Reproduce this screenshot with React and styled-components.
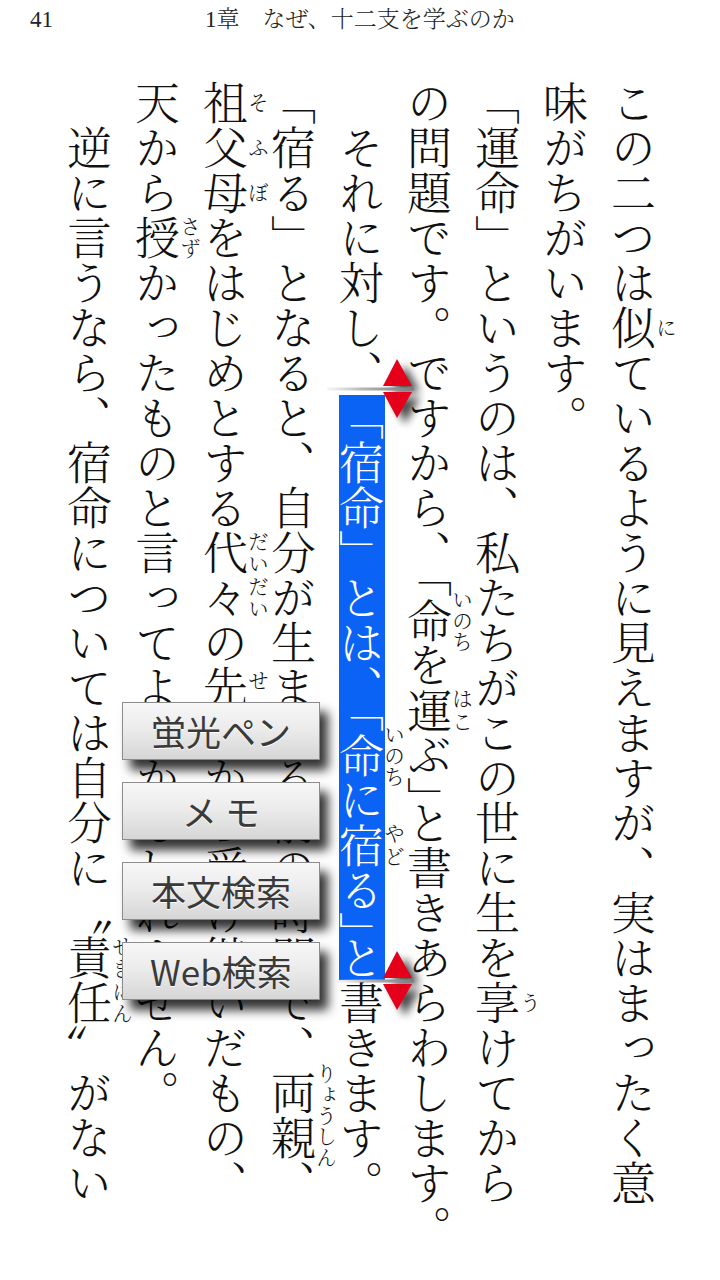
import React from 'react';
import styled, { createGlobalStyle } from 'styled-components';

const GlobalStyle = createGlobalStyle`
  html, body { margin: 0; padding: 0; background: #fff; }
  body { width: 720px; height: 1280px; overflow: hidden; }
`;

const Page = styled.div`
  position: relative;
  width: 720px;
  height: 1280px;
  overflow: hidden;
  background: #fff;
  font-family: "Noto Serif CJK JP", "Noto Sans CJK JP", serif;
  font-weight: 300;
`;

const Header = styled.header`
  display: flex;
  align-items: baseline;
  height: 42px;
  padding-left: 30px;
  font-family: "Liberation Serif", "Noto Serif CJK JP", "Noto Sans CJK JP", serif;
  font-size: 23px;
  line-height: 40px;
  color: #222;
`;

const PageNo = styled.span`
  width: 175px;
`;

const Title = styled.span`
  white-space: pre;
`;

const Body = styled.main`
  box-sizing: border-box;
  width: 720px;
  height: 1200px;
  writing-mode: vertical-rl;
  padding: 38px 53px 0 0;
  font-size: 45px;
  color: #111;
  text-spacing-trim: space-all;
`;

const Line = styled.p`
  margin: 0;
  width: 68px;
  line-height: 68px;
  white-space: nowrap;
  text-indent: ${(p) => (p.$indent ? '1em' : '0')};
`;

const Half = styled.span`
  font-feature-settings: "vhal" 1;
`;

const Selected = styled.span`
  color: #fff;
  background-image: linear-gradient(#0b63f6, #0b63f6);
  background-repeat: no-repeat;
  background-position: center;
  background-size: 46px 100%;
`;

const RubyBase = styled.span`
  position: relative;
`;

const RubyText = styled.span`
  position: absolute;
  top: 0;
  bottom: 0;
  left: calc(50% + 22px);
  display: flex;
  justify-content: ${(p) => p.$align};
  font-size: 21px;
  line-height: 21px;
  width: 21px;
  color: #111;
  white-space: nowrap;
  text-indent: 0;
`;

const RubyChar = styled.span`
  display: block;
`;

function R({ b, t }) {
  const align = t.length * 21 > b.length * 45 ? 'center' : 'space-around';
  return (
    <RubyBase>
      {b}
      <RubyText $align={align}>
        {Array.from(t).map((c, i) => (
          <RubyChar key={i}>{c}</RubyChar>
        ))}
      </RubyText>
    </RubyBase>
  );
}

const HandleBox = styled.div`
  position: absolute;
  left: ${(p) => p.$x}px;
  top: ${(p) => p.$y}px;
  width: 100px;
  height: 80px;
  pointer-events: none;
`;

function Handle({ id, x, y, lineStart }) {
  return (
    <HandleBox $x={x} $y={y}>
      <svg width="100" height="80" viewBox="0 0 100 80">
        <defs>
          <filter id={`blur-${id}`} x="-50%" y="-50%" width="200%" height="200%">
            <feGaussianBlur stdDeviation="4" />
          </filter>
          <linearGradient id={`line-${id}`} x1="0" x2="1" y1="0" y2="0">
            <stop offset="0" stopColor="#cfcfcf" stopOpacity="0.2" />
            <stop offset="0.4" stopColor="#b5b5b5" />
            <stop offset="1" stopColor="#7a7a7a" />
          </linearGradient>
        </defs>
        <g filter={`url(#blur-${id})`} opacity="0.7" transform="translate(8,6)">
          <polygon points="72,4 87,31 58,31" fill="#000" />
          <polygon points="58,37 87,37 72,63" fill="#000" />
        </g>
        <rect x={lineStart} y="32.5" width={89 - lineStart} height="3" fill={`url(#line-${id})`} />
        <polygon points="72,4 87,31 58,31" fill="#e4001b" />
        <polygon points="58,37 87,37 72,63" fill="#e4001b" />
      </svg>
    </HandleBox>
  );
}

const Menu = styled.div`
  position: absolute;
  left: 122px;
  top: 702px;
  display: flex;
  flex-direction: column;
  gap: 22px;
`;

const MenuButton = styled.button`
  box-sizing: border-box;
  width: 198px;
  height: 58px;
  margin: 0;
  padding: 0;
  border: 1px solid #8c8c8c;
  background: linear-gradient(#f7f7f7 0%, #ececec 45%, #d6d6d6 100%);
  box-shadow: 8px 10px 10px rgba(0, 0, 0, 0.8);
  font-family: "Noto Sans CJK JP", "Noto Sans", sans-serif;
  font-weight: 400;
  font-size: 35px;
  line-height: 56px;
  color: #3a3a3a;
  text-shadow: 0 1px 0 #fff;
  text-align: center;
  white-space: pre;
`;

export default function App() {
  return (
    <>
      <GlobalStyle />
      <Page>
        <Header>
          <PageNo>41</PageNo>
          <Title>1章　なぜ、十二支を学ぶのか</Title>
        </Header>
        <Body>
          <Line>
            この二つは<R b="似" t="に" />ているように見えますが、実はまったく意
          </Line>
          <Line>味がちがいます。</Line>
          <Line>
            「運命」というのは、私たちがこの世に生を<R b="享" t="う" />けてから
          </Line>
          <Line>
            の問題です。ですから<Half>、</Half>「<R b="命" t="いのち" />を
            <R b="運" t="はこ" />ぶ<Half>」</Half>と書きあらわします。
          </Line>
          <Line $indent>
            それに対し、
            <Selected>
              「宿命」とは<Half>、</Half>「<R b="命" t="いのち" />に<R b="宿" t="やど" />る
              <Half>」</Half>と
            </Selected>
            書きます。
          </Line>
          <Line>
            「宿る」となると、自分が生まれる前の時間で、<R b="両親" t="りょうしん" />、
          </Line>
          <Line>
            <R b="祖父母" t="そふぼ" />をはじめとする<R b="代々" t="だいだい" />の
            <R b="先祖" t="せんぞ" />から受け継いだもの、
          </Line>
          <Line>
            天から<R b="授" t="さず" />かったものと言ってよいかもしれません。
          </Line>
          <Line $indent>
            逆に言うなら、宿命については自分に〝<R b="責任" t="せきにん" />〟がない
          </Line>
        </Body>
        <Handle id="top" x={325} y={355} lineStart={2} />
        <Handle id="bottom" x={325} y={947} lineStart={12} />
        <Menu>
          <MenuButton>蛍光ペン</MenuButton>
          <MenuButton>メ モ</MenuButton>
          <MenuButton>本文検索</MenuButton>
          <MenuButton>Web検索</MenuButton>
        </Menu>
      </Page>
    </>
  );
}
